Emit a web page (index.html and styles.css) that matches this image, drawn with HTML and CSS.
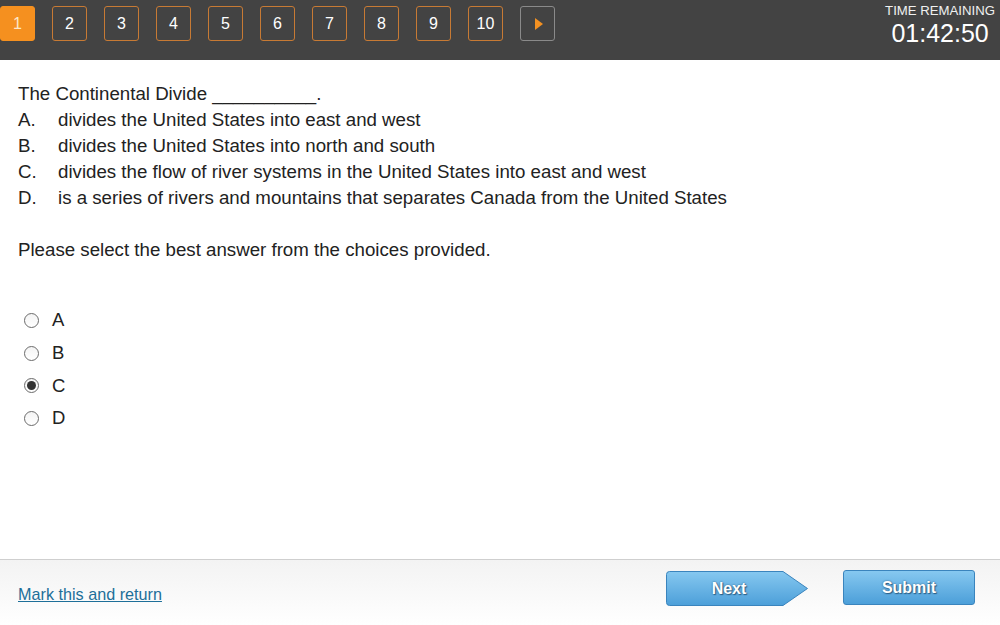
FILE: index.html
```html
<!DOCTYPE html>
<html>
<head>
<meta charset="utf-8">
<link rel="stylesheet" href="styles.css">
</head>
<body>
<div class="page">
  <header class="topbar">
    <nav class="pager">
      <span class="pg current">1</span>
      <span class="pg">2</span>
      <span class="pg">3</span>
      <span class="pg">4</span>
      <span class="pg">5</span>
      <span class="pg">6</span>
      <span class="pg">7</span>
      <span class="pg">8</span>
      <span class="pg">9</span>
      <span class="pg">10</span>
      <span class="pg arrow"><svg width="10" height="12" viewBox="0 0 10 12"><polygon points="1,0 9,6 1,12" fill="#f39122"/></svg></span>
    </nav>
    <div class="timer">
      <div class="timer-label">TIME REMAINING</div>
      <div class="timer-value">01:42:50</div>
    </div>
  </header>

  <main class="content">
    <p class="line">The Continental Divide __________.</p>
    <p class="line choice"><span class="letter">A.</span>divides the United States into east and west</p>
    <p class="line choice"><span class="letter">B.</span>divides the United States into north and south</p>
    <p class="line choice"><span class="letter">C.</span>divides the flow of river systems in the United States into east and west</p>
    <p class="line choice"><span class="letter">D.</span>is a series of rivers and mountains that separates Canada from the United States</p>
    <p class="line prompt">Please select the best answer from the choices provided.</p>

    <div class="options">
      <label class="opt"><input type="radio" name="ans"><span>A</span></label>
      <label class="opt"><input type="radio" name="ans"><span>B</span></label>
      <label class="opt"><input type="radio" name="ans" checked><span>C</span></label>
      <label class="opt"><input type="radio" name="ans"><span>D</span></label>
    </div>
  </main>

  <footer class="footer">
    <a class="mark" href="#">Mark this and return</a>
    <div class="actions">
      <button class="btn-next">
        <svg class="next-shape" width="143" height="35" viewBox="0 0 143 35">
          <defs>
            <linearGradient id="g1" x1="0" y1="0" x2="0" y2="1">
              <stop offset="0" stop-color="#86c8f0"/>
              <stop offset="1" stop-color="#4c9fd9"/>
            </linearGradient>
          </defs>
          <path d="M3.5,0.5 H117 L141.5,17.5 L117,34.5 H3.5 Q0.5,34.5 0.5,31.5 V3.5 Q0.5,0.5 3.5,0.5 Z" fill="url(#g1)" stroke="#3a84bd" stroke-width="1"/>
        </svg>
        <span class="btn-text next-text">Next</span>
      </button>
      <button class="btn-submit"><span class="btn-text">Submit</span></button>
    </div>
  </footer>
</div>
</body>
</html>
```
FILE: styles.css
```css
html, body {
  margin: 0;
  padding: 0;
}
body {
  font-family: "Liberation Sans", Arial, sans-serif;
  color: #222;
  background: #fff;
}
.page {
  display: flex;
  flex-direction: column;
  height: 625px;
  width: 1000px;
  overflow: hidden;
}
.topbar {
  height: 60px;
  flex: none;
  background: #434343;
  display: flex;
  justify-content: space-between;
  align-items: flex-start;
}
.pager {
  display: flex;
  gap: 17px;
  padding-top: 6px;
}
.pg {
  box-sizing: border-box;
  width: 35px;
  height: 35px;
  border: 1px solid #c77a34;
  border-radius: 3px;
  color: #fff;
  font-size: 16px;
  display: flex;
  align-items: center;
  justify-content: center;
}
.pg.current {
  background: #f5901f;
  border-color: #f5901f;
  color: #fde6c8;
}
.pg.arrow {
  border-color: #8a8a8a;
  padding-left: 2px;
}
.timer {
  padding-right: 5px;
  padding-top: 3px;
  text-align: center;
  color: #fff;
}
.timer-label {
  font-size: 13.2px;
  line-height: 16px;
  color: #f0f0f0;
}
.timer-value {
  font-size: 25px;
  line-height: 28px;
}
.content {
  flex: 1;
  padding: 21px 0 0 18px;
}
.line {
  margin: 0;
  font-size: 18.7px;
  line-height: 26px;
  white-space: nowrap;
}
.choice {
  display: flex;
}
.letter {
  width: 40px;
  flex: none;
}
.prompt {
  margin-top: 26px;
}
.options {
  display: flex;
  flex-direction: column;
  margin-top: 41px;
}
.opt {
  display: flex;
  align-items: center;
  height: 32.7px;
  font-size: 18.5px;
}
.opt input {
  appearance: none;
  -webkit-appearance: none;
  box-sizing: border-box;
  width: 15px;
  height: 15px;
  margin: 0 13px 0 6px;
  border: 1px solid #6b6b6b;
  border-radius: 50%;
  background: linear-gradient(#f4f4f4, #ffffff);
  display: grid;
  place-items: center;
}
.opt input:checked::before {
  content: "";
  width: 9px;
  height: 9px;
  border-radius: 50%;
  background: #333;
}
.footer {
  flex: none;
  height: 65px;
  border-top: 1px solid #cfcfcf;
  background: linear-gradient(#f3f3f3, #ffffff);
  display: flex;
  justify-content: space-between;
  align-items: flex-start;
  padding-left: 18px;
}
.mark {
  margin-top: 25px;
  font-size: 16.2px;
  line-height: 18px;
  color: #1e6f99;
  text-decoration: underline;
}
.actions {
  display: flex;
  align-items: flex-start;
  gap: 34px;
  padding-right: 25px;
}
.btn-next {
  margin-top: 11px;
  padding: 0;
  border: 0;
  background: none;
  display: grid;
  width: 143px;
  height: 35px;
}
.next-shape {
  grid-area: 1 / 1;
  display: block;
}
.btn-text {
  color: #fff;
  font-family: "Liberation Sans", Arial, sans-serif;
  font-weight: bold;
  font-size: 16px;
  text-shadow: 0 0 2px #2c5f86, 1px 1px 1px #2c5f86;
}
.next-text {
  grid-area: 1 / 1;
  align-self: center;
  justify-self: start;
  width: 126px;
  text-align: center;
}
.btn-submit {
  margin-top: 10px;
  box-sizing: border-box;
  width: 132px;
  height: 35px;
  border: 1px solid #3a84bd;
  border-radius: 3px;
  background: linear-gradient(#86c8f0, #4c9fd9);
  padding: 0;
}
```
